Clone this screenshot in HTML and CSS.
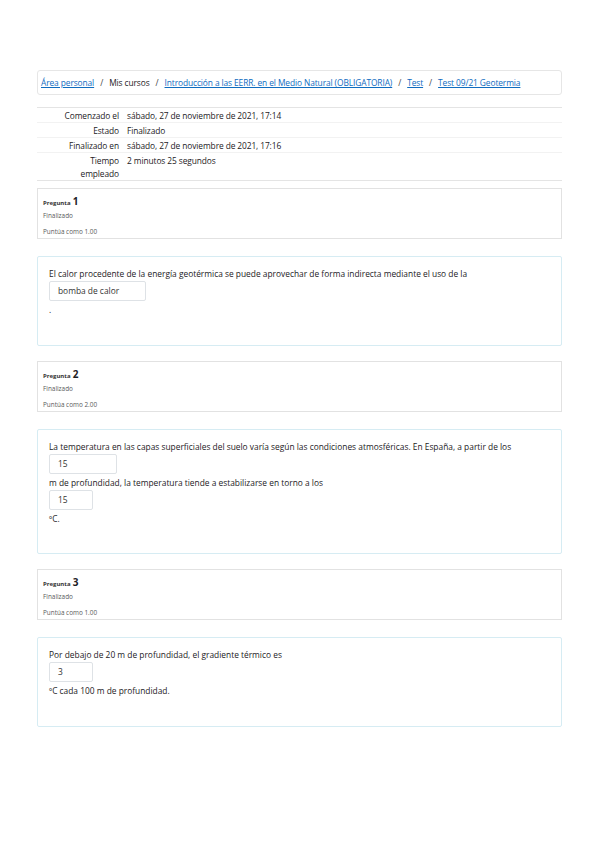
FILE: index.html
```html
<!DOCTYPE html>
<html lang="es">
<head>
<meta charset="utf-8">
<link rel="stylesheet" href="styles.css">
</head>
<body>
<div class="page">
  <nav class="crumbs">
    <a href="#">Área personal</a><span class="sep">/</span><span>Mis cursos</span><span class="sep">/</span><a href="#">Introducción a las EERR. en el Medio Natural (OBLIGATORIA)</a><span class="sep">/</span><a href="#">Test</a><span class="sep">/</span><a href="#">Test 09/21 Geotermia</a>
  </nav>
  <table class="summary">
    <tr><th>Comenzado el</th><td>sábado, 27 de noviembre de 2021, 17:14</td></tr>
    <tr><th>Estado</th><td>Finalizado</td></tr>
    <tr><th>Finalizado en</th><td>sábado, 27 de noviembre de 2021, 17:16</td></tr>
    <tr><th>Tiempo<br>empleado</th><td>2 minutos 25 segundos</td></tr>
  </table>

  <div class="info">
    <div class="qno"><span class="lbl">Pregunta</span> <span class="num">1</span></div>
    <div class="meta">Finalizado</div>
    <div class="meta">Puntúa como 1.00</div>
  </div>
  <div class="content c1">
    <p>El calor procedente de la energía geotérmica se puede aprovechar de forma indirecta mediante el uso de la</p>
    <div class="field w97">bomba de calor</div>
    <p>.</p>
  </div>

  <div class="info">
    <div class="qno"><span class="lbl">Pregunta</span> <span class="num">2</span></div>
    <div class="meta">Finalizado</div>
    <div class="meta">Puntúa como 2.00</div>
  </div>
  <div class="content c2">
    <p>La temperatura en las capas superficiales del suelo varía según las condiciones atmosféricas. En España, a partir de los</p>
    <div class="field w68">15</div>
    <p>m de profundidad, la temperatura tiende a estabilizarse en torno a los</p>
    <div class="field w44">15</div>
    <p>ºC.</p>
  </div>

  <div class="info">
    <div class="qno"><span class="lbl">Pregunta</span> <span class="num">3</span></div>
    <div class="meta">Finalizado</div>
    <div class="meta">Puntúa como 1.00</div>
  </div>
  <div class="content c3">
    <p>Por debajo de 20 m de profundidad, el gradiente térmico es</p>
    <div class="field w44">3</div>
    <p>ºC cada 100 m de profundidad.</p>
  </div>
</div>
</body>
</html>
```

FILE: styles.css
```css
html, body {
  margin: 0;
  padding: 0;
  background: #fff;
}
body {
  font-family: "Open Sans", "Liberation Sans", sans-serif;
  color: #1d2125;
  font-size: 8px;
}
.page {
  width: 525px;
  margin-left: 37px;
  padding-top: 70px;
}
.crumbs {
  border: 1px solid #e6e6e6;
  border-radius: 3px;
  height: 23px;
  display: flex;
  align-items: center;
  padding-left: 3px;
  font-size: 8.4px;
  letter-spacing: -0.1px;
  white-space: nowrap;
}
.crumbs a {
  color: #0f6cbf;
  text-decoration: underline;
}
.crumbs .sep {
  color: #444;
  margin: 0 6px;
}
.summary {
  margin-top: 12px;
  width: 100%;
  border-collapse: collapse;
  border-top: 1px solid #e4e4e4;
  border-bottom: 1px solid #e4e4e4;
  font-size: 8.4px;
  letter-spacing: -0.1px;
}
.summary tr + tr th,
.summary tr + tr td {
  border-top: 1px solid #f2f2f2;
}
.summary th {
  font-weight: normal;
  text-align: right;
  width: 82px;
  padding: 1px 4px 0 0;
  vertical-align: top;
  line-height: 13px;
}
.summary td {
  padding: 1px 4px 0 4px;
  vertical-align: top;
  line-height: 13px;
}
.info {
  margin-top: 15px;
  border: 1px solid #e2e2e2;
  padding: 6px 5px 0 5px;
  box-sizing: border-box;
  height: 51px;
}
.summary + .info { margin-top: 7px; }
.qno {
  line-height: 12px;
  height: 13px;
}
.qno .lbl {
  font-size: 6px;
  font-weight: bold;
  color: #333;
}
.qno .num {
  font-size: 10px;
  font-weight: bold;
}
.meta {
  font-size: 6.4px;
  color: #5a5a5a;
  line-height: 8px;
  margin-top: 8px;
}
.qno + .meta { margin-top: 4px; }
.content {
  margin-top: 17px;
  border: 1px solid #d6ecf3;
  border-radius: 2px;
  box-sizing: border-box;
  padding: 10px 11px 0 11px;
  font-size: 8.4px;
  letter-spacing: 0;
}
.content p {
  margin: 0;
  line-height: 13px;
}
.field {
  border: 1px solid #dee2e6;
  border-radius: 2px;
  height: 20px;
  box-sizing: border-box;
  line-height: 18px;
  padding-left: 8px;
  color: #333;
  margin: 1px 0 2px 0;
}
.w97 { width: 97px; }
.w68 { width: 68px; }
.w44 { width: 44px; }
.c1 { height: 90px; }
.c2 { height: 125px; }
.c3 { height: 90px; }
```
